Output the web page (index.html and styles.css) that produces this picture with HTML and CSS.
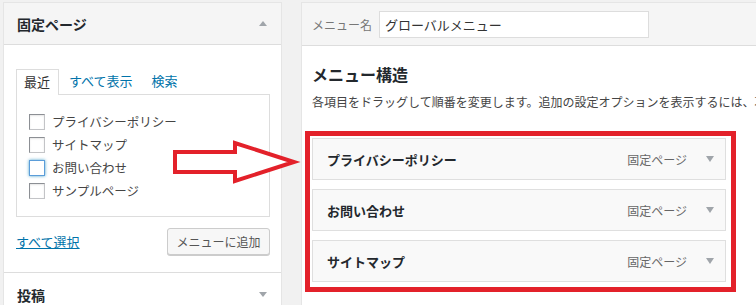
FILE: index.html
```html
<!DOCTYPE html>
<html lang="ja">
<head>
<meta charset="utf-8">
<link rel="stylesheet" href="styles.css">
</head>
<body>
<div class="page">
  <div class="side">
    <div class="sec-head">
      <span class="sec-title">固定ページ</span>
      <svg class="tri" width="8" height="5" viewBox="0 0 8 5"><polygon points="0,5 8,5 4,0" fill="#a0a5aa"/></svg>
    </div>
    <div class="sec-body">
      <div class="tabs">
        <span class="tab active">最近</span>
        <span class="tab">すべて表示</span>
        <span class="tab">検索</span>
      </div>
      <div class="tab-panel">
        <div class="row"><span class="cb"></span><span class="lbl">プライバシーポリシー</span></div>
        <div class="row"><span class="cb"></span><span class="lbl">サイトマップ</span></div>
        <div class="row"><span class="cb focus"></span><span class="lbl">お問い合わせ</span></div>
        <div class="row"><span class="cb"></span><span class="lbl">サンプルページ</span></div>
      </div>
      <div class="actions">
        <span class="select-all">すべて選択</span>
        <span class="btn">メニューに追加</span>
      </div>
    </div>
    <div class="sec-head next">
      <span class="sec-title">投稿</span>
      <svg class="tri" width="8" height="5" viewBox="0 0 8 5"><polygon points="0,0 8,0 4,5" fill="#a0a5aa"/></svg>
    </div>
  </div>
  <div class="main">
    <div class="main-head">
      <span class="name-lbl">メニュー名</span>
      <span class="name-input">グローバルメニュー</span>
    </div>
    <div class="main-body">
      <h3 class="struct-title">メニュー構造</h3>
      <p class="desc">各項目をドラッグして順番を変更します。追加の設定オプションを表示するには、項目の右にある矢印をクリックしてください。</p>
      <div class="highlight">
        <div class="item"><span class="item-title">プライバシーポリシー</span><span class="item-type">固定ページ</span><svg class="item-tri" width="8" height="6" viewBox="0 0 8 6"><polygon points="0,0 8,0 4,6" fill="#a0a5aa"/></svg></div>
        <div class="item"><span class="item-title">お問い合わせ</span><span class="item-type">固定ページ</span><svg class="item-tri" width="8" height="6" viewBox="0 0 8 6"><polygon points="0,0 8,0 4,6" fill="#a0a5aa"/></svg></div>
        <div class="item"><span class="item-title">サイトマップ</span><span class="item-type">固定ページ</span><svg class="item-tri" width="8" height="6" viewBox="0 0 8 6"><polygon points="0,0 8,0 4,6" fill="#a0a5aa"/></svg></div>
      </div>
    </div>
  </div>
  <svg class="arrow" width="140" height="60" viewBox="170 135 140 60">
    <polygon points="175,152 235,152 235,143 294,162 235,181 235,172 175,172" fill="#ffffff" stroke="#e3212a" stroke-width="4" stroke-linejoin="miter"/>
  </svg>
</div>
</body>
</html>
```
FILE: styles.css
```css
* { box-sizing: border-box; }
html, body {
  margin: 0;
  padding: 0;
  background: #f1f1f1;
  font-family: "Noto Sans CJK JP", "Noto Sans", sans-serif;
  color: #444;
}
.page {
  position: relative;
  width: 756px;
  height: 305px;
  overflow: hidden;
  display: flex;
  align-items: flex-start;
  padding-top: 2px;
}
.side {
  margin-left: 3px;
  width: 279px;
  background: #fff;
  border: 1px solid #e5e5e5;
  flex: none;
}
.sec-head {
  height: 42px;
  background: #f5f5f5;
  border-bottom: 1px solid #dddddd;
  display: flex;
  align-items: center;
  justify-content: space-between;
  padding: 0 14px 0 13px;
}
.sec-head.next {
  border-bottom: none;
  border-top: 1px solid #dddddd;
  background: #fff;
  height: 44px;
}
.sec-title {
  font-size: 14px;
  font-weight: bold;
  color: #23282d;
  line-height: 20px;
}
.tri { display: block; }
.sec-body {
  padding: 24px 11px 17px 12px;
}
.tabs {
  display: flex;
  height: 25px;
  font-size: 13px;
  line-height: 24px;
}
.tab {
  color: #0073aa;
  padding: 0 9px;
}
.tab + .tab { margin-left: 0; }
.tab:nth-child(3) { margin-left: 1px; }
.tab.active {
  color: #333;
  background: #fff;
  border: 1px solid #dddddd;
  border-bottom: none;
  padding: 0 8px 0 7px;
  margin-right: 1px;
  position: relative;
  height: 26px;
}
.tab-panel {
  border: 1px solid #dddddd;
  height: 123px;
  padding: 15px 12px 0 12px;
}
.row {
  display: flex;
  align-items: center;
  height: 23px;
}
.cb {
  width: 16px;
  height: 16px;
  border: 1px solid #8c8f94;
  border-right-color: #c3c4c7;
  border-bottom-color: #c3c4c7;
  background: #fff;
  box-shadow: inset 0 1px 2px rgba(0,0,0,0.1);
  flex: none;
}
.cb.focus {
  border-color: #5b9dd9;
  box-shadow: 0 0 3px rgba(30,140,190,0.8);
}
.lbl {
  margin-left: 7px;
  font-size: 12.5px;
  color: #444;
  line-height: 20px;
}
.actions {
  margin-top: 11px;
  display: flex;
  align-items: center;
  justify-content: space-between;
}
.select-all {
  font-size: 13px;
  color: #0073aa;
  text-decoration: underline;
  line-height: 20px;
}
.btn {
  width: 103px;
  height: 27px;
  border: 1px solid #cccccc;
  border-radius: 3px;
  background: #f7f7f7;
  box-shadow: 0 1px 0 #cccccc;
  font-size: 12px;
  color: #555;
  display: flex;
  align-items: center;
  justify-content: center;
}
.main {
  margin-left: 19px;
  width: 470px;
  flex: none;
  background: #fff;
  border: 1px solid #e5e5e5;
  border-right: none;
  height: 320px;
}
.main-head {
  height: 43px;
  background: #f5f5f5;
  border-bottom: 1px solid #dddddd;
  display: flex;
  align-items: center;
  padding-left: 10px;
}
.name-lbl {
  font-size: 12px;
  color: #777;
  width: 67px;
}
.name-input {
  width: 270px;
  height: 27px;
  border: 1px solid #dddddd;
  background: #fff;
  font-size: 13px;
  color: #333;
  line-height: 25px;
  padding-left: 5px;
  margin-top: 1px;
}
.main-body {
  padding: 18px 0 0 10px;
}
.struct-title {
  margin: 0;
  font-size: 16px;
  font-weight: bold;
  color: #23282d;
  line-height: 20px;
}
.desc {
  margin: 9px 0 0 0;
  font-size: 12px;
  line-height: 18px;
  color: #444;
  white-space: nowrap;
  overflow: hidden;
}
.highlight {
  margin: 20px 0 0 -7px;
  width: 431px;
  border: 5px solid #e3212a;
  padding: 2px 5px 5px 2px;
  display: flex;
  flex-direction: column;
  gap: 9px;
}
.item {
  height: 42px;
  border: 1px solid #dfdfdf;
  background: #f9f9f9;
  display: flex;
  align-items: center;
  padding: 0 11px 0 14px;
}
.item-title {
  font-size: 13px;
  font-weight: bold;
  color: #23282d;
  flex: 1;
}
.item-type {
  font-size: 12px;
  color: #666;
  margin-right: 19px;
}
.item-tri { display: block; }
.arrow {
  position: absolute;
  left: 170px;
  top: 135px;
}
```
